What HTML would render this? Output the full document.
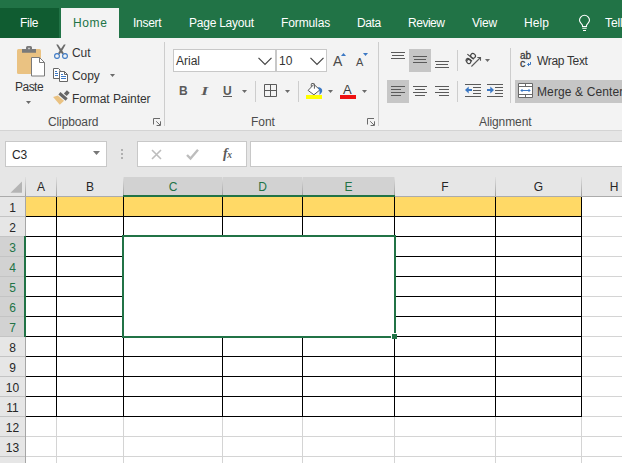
<!DOCTYPE html>
<html>
<head>
<meta charset="utf-8">
<style>
html,body{margin:0;padding:0;overflow:hidden;}
#root{position:absolute;left:0;top:0;width:622px;height:463px;overflow:hidden;background:#fff;}
body{width:622px;height:463px;overflow:hidden;position:relative;background:#fff;font-family:"Liberation Sans",sans-serif;font-size:12px;color:#262626;}
.a{position:absolute;}
.t{position:absolute;white-space:nowrap;line-height:14px;height:14px;}
svg{position:absolute;overflow:visible;}
#top{left:0;top:0;width:622px;height:38px;background:#217346;}
#file{left:0;top:8px;width:59px;height:30px;background:#105c31;}
#home{left:61px;top:8px;width:58px;height:31px;background:#f3f3f3;}
#rib{left:0;top:38px;width:622px;height:92px;background:#f3f3f3;}
#band{left:0;top:130px;width:622px;height:48px;background:#e6e6e6;}
#bandline{left:0;top:130px;width:622px;height:1px;background:#d4d4d4;}
.box{position:absolute;background:#fff;border:1px solid #c8c8c8;box-sizing:border-box;}
.vs{position:absolute;width:1px;background:#cdcdcd;}
.sel{position:absolute;background:#c6c6c6;}
.hl{position:absolute;height:1px;background:#d4d4d4;}
.vl{position:absolute;width:1px;background:#d4d4d4;}
.bh{position:absolute;height:1px;background:#000;}
.bv{position:absolute;width:1px;background:#000;}
</style>
</head>
<body>
<div id="root">
<div class="a" id="top"></div>
<div class="a" id="file"></div>
<div class="a" id="home"></div>
<div class="a" id="rib"></div>
<div class="a" id="band"></div>
<div class="a" id="bandline"></div>
<!-- bulb -->
<svg style="left:578px;top:14px;" width="13" height="18" viewBox="0 0 13 18" fill="none" stroke="#fff" stroke-width="1.1">
<path d="M4.500 12.500v-1C4.500 9.800 1.500 9 1.500 6.300a5 5 0 0 1 10 0C11.500 9 8.500 9.800 8.500 11.500v1z"/>
<path d="M4.300 14.200h4.400M5 16.500h3"/>
</svg>

<!-- ===== clipboard ===== -->
<svg style="left:16px;top:44px;" width="30" height="34" viewBox="0 0 30 34">
<rect x="1" y="5" width="24" height="25" rx="1.500" fill="#eac282"/>
<path d="M10 3.500a1.500 1.500 0 0 1 1.500-1.500h3a1.500 1.500 0 0 1 1.500 1.500v1.500h4v3.800h-14v-3.800h4z" fill="#7a7a7a"/><rect x="12.300" y="3.800" width="1.400" height="1.400" fill="#e8e8e8"/>
<path d="M15.500 13.500h8l5 5v13.500h-13z" fill="#fff" stroke="#7a7a7a" stroke-width="1"/>
<path d="M23.500 13.500v5h5" fill="none" stroke="#7a7a7a" stroke-width="1"/>
</svg>
<svg style="left:26px;top:101px;" width="5" height="3" viewBox="0 0 5 3"><path d="M0 0h5L2.500 3z" fill="#6a6a6a"/></svg>
<!-- cut -->
<svg style="left:53px;top:44px;" width="16" height="16" viewBox="0 0 16 16" fill="none">
<path d="M3.200 0.500L5 0.500L9.100 6.400L10.900 9.300L9.300 10.200L7 7.300z" fill="#6a6a6a"/>
<path d="M12.700 0.500L10.900 0.500L6.800 6.400L5 9.300L6.600 10.200L8.900 7.300z" fill="#6a6a6a"/>
<circle cx="4" cy="12" r="2.400" stroke="#3b78c4" stroke-width="1.100"/>
<circle cx="12" cy="12" r="2.400" stroke="#3b78c4" stroke-width="1.100"/>
</svg>
<!-- copy -->
<svg style="left:53px;top:68px;" width="16" height="15" viewBox="0 0 16 15" fill="none">
<path d="M0.500 0.500H5.500L7 2V10.500H0.500z" fill="#fff" stroke="#666" stroke-width="1"/>
<path d="M2 3.500h2M2 5.500h3M2 7.500h3" stroke="#3b78c4" stroke-width="1"/>
<path d="M6.500 3.500H11.500L14.500 6.500V13.500H6.500z" fill="#fff" stroke="#666" stroke-width="1"/>
<path d="M11.500 3.500V6.500H14.500" stroke="#666" stroke-width="1"/>
<path d="M8 6.500h2M8 8.500h5M8 10.500h5" stroke="#3b78c4" stroke-width="1"/>
</svg>
<svg style="left:110px;top:74px;" width="5" height="3" viewBox="0 0 5 3"><path d="M0 0h5L2.500 3z" fill="#6a6a6a"/></svg>
<!-- format painter -->
<svg style="left:53px;top:90px;" width="17" height="15" viewBox="0 0 17 15">
<path d="M13.900 0.300L16.700 2.800L13.700 5.900L10.900 3.400z" fill="#666"/>
<path d="M7.400 2.100L14.700 8.200L12.600 10.700L5.400 4.600z" fill="#666"/>
<path d="M4.800 5.600L11 10.800L6.800 14.700L0.100 7.100z" fill="#eac282"/>
</svg>
<svg style="left:153px;top:118px;" width="8" height="8" viewBox="0 0 8 8" fill="none" stroke="#6a6a6a" stroke-width="1"><path d="M0.500 6.500V0.500H7M3.200 3.300L7 7M7.500 3.300V7.500H3.600"/></svg>
<div class="vs" style="left:164px;top:42px;height:84px;"></div>

<!-- ===== font ===== -->
<div class="box" style="left:173px;top:49px;width:103px;height:23px;"></div>
<div class="box" style="left:276px;top:49px;width:51px;height:23px;"></div>
<svg style="left:258px;top:57px;" width="14" height="8" viewBox="0 0 14 8" fill="none" stroke="#444" stroke-width="1.200"><path d="M0.500 0.800l6.500 6.500 6.500-6.500"/></svg>
<svg style="left:310px;top:57px;" width="14" height="8" viewBox="0 0 14 8" fill="none" stroke="#444" stroke-width="1.200"><path d="M0.500 0.800l6.500 6.500 6.500-6.500"/></svg>
<div class="t" style="left:333px;top:54px;font-size:14px;color:#4a4a4a;">A</div>
<svg style="left:341px;top:53px;" width="5" height="3" viewBox="0 0 5 3"><path d="M0 3h5L2.500 0z" fill="#3b78c4"/></svg>
<div class="t" style="left:356px;top:55px;font-size:11px;color:#4a4a4a;">A</div>
<svg style="left:363px;top:53px;" width="5" height="3" viewBox="0 0 5 3"><path d="M0 0h5L2.500 3z" fill="#3b78c4"/></svg>
<div class="t" style="left:179px;top:84px;font-weight:bold;color:#5a5a5a;">B</div>
<div class="t" style="left:202px;top:84px;font-style:italic;font-weight:bold;font-family:'Liberation Serif',serif;font-size:13.500px;color:#5a5a5a;transform:scaleX(1.300);transform-origin:50% 50%;">I</div>
<div class="t" style="left:223px;top:84px;font-weight:bold;font-size:12px;color:#5a5a5a;">U</div>
<div class="a" style="left:223px;top:96px;width:9px;height:1px;background:#5a5a5a;"></div>
<svg style="left:242px;top:90px;" width="5" height="3" viewBox="0 0 5 3"><path d="M0 0h5L2.500 3z" fill="#6a6a6a"/></svg>
<div class="vs" style="left:255px;top:81px;height:21px;"></div>
<svg style="left:264px;top:84px;" width="13" height="13" viewBox="0 0 13 13" fill="none" stroke="#5a5a5a" stroke-width="1"><path d="M0.500 0.500h12v12h-12zM6.500 0.500v12M0.500 6.500h12"/></svg>
<svg style="left:285px;top:90px;" width="5" height="3" viewBox="0 0 5 3"><path d="M0 0h5L2.500 3z" fill="#6a6a6a"/></svg>
<div class="vs" style="left:298px;top:81px;height:21px;"></div>
<svg style="left:306px;top:82px;" width="18" height="18" viewBox="0 0 18 18" fill="none">
<path d="M2.100 8.400L7.900 2.400L13.900 7.900L7.900 12.800z" fill="#fff" stroke="#5a5a5a" stroke-width="1"/>
<path d="M5.300 4.700V2.200Q5.300 1.500 6 1.500H7.700Q8.400 1.500 8.400 2.200V6.700" stroke="#5a5a5a" stroke-width="1"/>
<path d="M12 5C15 5.300 16.600 7 16.200 9.200C15.900 10.700 14.600 12.100 13.200 12.700C13.600 11.200 13.800 9.600 13.300 8.400z" fill="#3b78c4"/>
<rect x="0" y="13" width="16" height="4" fill="#ffff00"/>
</svg>
<svg style="left:328px;top:90px;" width="5" height="3" viewBox="0 0 5 3"><path d="M0 0h5L2.500 3z" fill="#6a6a6a"/></svg>
<div class="t" style="left:343px;top:83px;font-size:13px;color:#3a3a3a;">A</div>
<div class="a" style="left:340px;top:95px;width:16px;height:4px;background:#ee1111;"></div>
<svg style="left:362px;top:90px;" width="5" height="3" viewBox="0 0 5 3"><path d="M0 0h5L2.500 3z" fill="#6a6a6a"/></svg>
<svg style="left:367px;top:118px;" width="8" height="8" viewBox="0 0 8 8" fill="none" stroke="#6a6a6a" stroke-width="1"><path d="M0.500 6.500V0.500H7M3.200 3.300L7 7M7.500 3.300V7.500H3.600"/></svg>
<div class="vs" style="left:378px;top:42px;height:84px;"></div>

<!-- ===== alignment ===== -->
<div class="sel" style="left:409px;top:49px;width:22px;height:23px;"></div>
<div class="sel" style="left:387px;top:80px;width:22px;height:23px;"></div>
<div class="sel" style="left:515px;top:80px;width:107px;height:23px;"></div>
<svg style="left:391px;top:50px;" width="14" height="20" viewBox="0 0 14 20" stroke="#5a5a5a" stroke-width="1"><path d="M0 2.500h14M1 5.500h12M0 8.500h14"/></svg>
<svg style="left:413px;top:50px;" width="14" height="20" viewBox="0 0 14 20" stroke="#5a5a5a" stroke-width="1"><path d="M0 6.500h14M1 9.500h12M0 12.500h14"/></svg>
<svg style="left:435px;top:50px;" width="14" height="20" viewBox="0 0 14 20" stroke="#5a5a5a" stroke-width="1"><path d="M0 11.500h14M1 14.500h12M0 17.500h14"/></svg>
<svg style="left:391px;top:85px;" width="14" height="14" viewBox="0 0 14 14" stroke="#5a5a5a" stroke-width="1"><path d="M0 1.500h14M0 4.500h10M0 7.500h14M0 10.500h10"/></svg>
<svg style="left:413px;top:85px;" width="14" height="14" viewBox="0 0 14 14" stroke="#5a5a5a" stroke-width="1"><path d="M0 1.500h14M2 4.500h10M0 7.500h14M2 10.500h10"/></svg>
<svg style="left:435px;top:85px;" width="14" height="14" viewBox="0 0 14 14" stroke="#5a5a5a" stroke-width="1"><path d="M0 1.500h14M4 4.500h10M0 7.500h14M4 10.500h10"/></svg>
<div class="vs" style="left:457px;top:50px;height:21px;"></div>
<div class="vs" style="left:457px;top:81px;height:21px;"></div>
<!-- orientation -->
<svg style="left:462px;top:50px;" width="18" height="18" viewBox="0 0 18 18" fill="none" stroke="#444" stroke-width="1.150"><g transform="translate(6.700 15.260) rotate(-50)"><ellipse cx="2.900" cy="-2.300" rx="2" ry="2.100"/><path d="M1.300 -4.800Q3.200 -6.300 4.700 -5.200Q5.200 -4.700 5.200 -3.600V0"/><path d="M7.700 -8.200V0"/><ellipse cx="10" cy="-2.700" rx="2.200" ry="2.500"/></g></svg>
<svg style="left:469px;top:56px;" width="14" height="12" viewBox="0 0 14 12" fill="none" stroke="#5a5a5a" stroke-width="1.100"><path d="M2.400 10.500L11.500 1.500M8.300 1.500H11.500V4.700"/></svg>
<svg style="left:485px;top:59px;" width="5" height="3" viewBox="0 0 5 3"><path d="M0 0h5L2.500 3z" fill="#6a6a6a"/></svg>
<!-- indents -->
<svg style="left:465px;top:84px;" width="16" height="13" viewBox="0 0 16 13" fill="none"><path d="M0 0.500h16M8 3.500h8M8 6.500h8M8 9.500h8M0 12.500h16" stroke="#5a5a5a" stroke-width="1"/><path d="M0 6L3.700 2.500V5H7V7H3.700V9.500z" fill="#3b78c4"/></svg>
<svg style="left:487px;top:84px;" width="16" height="13" viewBox="0 0 16 13" fill="none"><path d="M0 0.500h16M8 3.500h8M8 6.500h8M8 9.500h8M0 12.500h16" stroke="#5a5a5a" stroke-width="1"/><path d="M7 6L3.300 2.500V5H0V7H3.300V9.500z" fill="#3b78c4"/></svg>
<div class="vs" style="left:510px;top:48px;height:55px;"></div>
<!-- wrap text -->
<div class="t" style="left:520px;top:51px;font-size:10px;line-height:10px;height:10px;color:#3a3a3a;-webkit-text-stroke:0.300px #3a3a3a;">ab</div>
<div class="t" style="left:520px;top:58px;font-size:10.500px;line-height:10px;height:10px;color:#3a3a3a;-webkit-text-stroke:0.300px #3a3a3a;">c</div>
<svg style="left:527px;top:62px;" width="4" height="4" viewBox="0 0 4 4" fill="none" stroke="#3b78c4" stroke-width="1"><path d="M3.500 0v2.500H0.800M2 1L0.500 2.500 2 4"/></svg>
<!-- merge -->
<svg style="left:518px;top:83px;" width="15" height="15" viewBox="0 0 15 15" fill="none"><path d="M0.500 0.500h14v14h-14z" fill="#fff" stroke="#6a6a6a"/><path d="M0.500 3.500h14M0.500 11.500h14M7.500 0.500v3M7.500 11.500v3" stroke="#6a6a6a"/><path d="M3 7.500h9M4.500 6L3 7.500 4.500 9M10.500 6L12 7.500 10.500 9" stroke="#3b78c4"/></svg>

<!-- ===== formula bar ===== -->
<div class="box" style="left:5px;top:141px;width:102px;height:26px;"></div>
<svg style="left:93px;top:151px;" width="7" height="4" viewBox="0 0 7 4"><path d="M0 0h7L3.500 4z" fill="#777"/></svg>
<div class="a" style="left:121px;top:149px;width:2px;height:2px;background:#b0b0b0;box-shadow:0 4px 0 #b0b0b0,0 8px 0 #b0b0b0;"></div>
<div class="box" style="left:137px;top:141px;width:110px;height:26px;"></div>
<svg style="left:151px;top:149px;" width="11" height="11" viewBox="0 0 11 11" stroke="#bdbdbd" stroke-width="1.600" fill="none"><path d="M1 1l9 9M10 1l-9 9"/></svg>
<svg style="left:186px;top:149px;" width="13" height="11" viewBox="0 0 13 11" stroke="#bdbdbd" stroke-width="2.400" fill="none"><path d="M1 6l3.500 3.500L12 0.800"/></svg>
<div class="t" style="left:223px;top:147px;font-family:'Liberation Serif',serif;font-style:italic;font-weight:bold;font-size:14px;color:#5a5a5a;">f<span style="font-size:9.500px;letter-spacing:0;margin-left:-0.500px;">x</span></div>
<div class="box" style="left:250px;top:141px;width:380px;height:26px;"></div>

<!-- ===== grid ===== -->
<div class="a" style="left:0;top:178px;width:622px;height:19px;background:#e6e6e6;"></div>
<div class="a" style="left:0;top:197px;width:26px;height:266px;background:#e6e6e6;"></div>
<div class="a" style="left:124px;top:177px;width:270px;height:19px;background:#d2d2d2;"></div>
<div class="a" style="left:0;top:236px;width:25px;height:100px;background:#d2d2d2;"></div>
<svg style="left:10px;top:181px;" width="13" height="13" viewBox="0 0 13 13"><path d="M12 0.500V11.800H0.500z" fill="#b4b4b4"/></svg>
<div class="a" style="left:25px;top:177px;width:1px;height:20px;background:linear-gradient(#e0e0e0,#9c9c9c);"></div>
<div class="a" style="left:56px;top:177px;width:1px;height:20px;background:linear-gradient(#e0e0e0,#9c9c9c);"></div>
<div class="a" style="left:123px;top:177px;width:1px;height:20px;background:linear-gradient(#e0e0e0,#9c9c9c);"></div>
<div class="a" style="left:222px;top:177px;width:1px;height:20px;background:linear-gradient(#e0e0e0,#9c9c9c);"></div>
<div class="a" style="left:302px;top:177px;width:1px;height:20px;background:linear-gradient(#e0e0e0,#9c9c9c);"></div>
<div class="a" style="left:394px;top:177px;width:1px;height:20px;background:linear-gradient(#e0e0e0,#9c9c9c);"></div>
<div class="a" style="left:495px;top:177px;width:1px;height:20px;background:linear-gradient(#e0e0e0,#9c9c9c);"></div>
<div class="a" style="left:581px;top:177px;width:1px;height:20px;background:linear-gradient(#e0e0e0,#9c9c9c);"></div>
<div class="t" style="left:26px;width:30px;top:180px;text-align:center;color:#262626;">A</div>
<div class="t" style="left:57px;width:66px;top:180px;text-align:center;color:#262626;">B</div>
<div class="t" style="left:124px;width:98px;top:180px;text-align:center;color:#217346;">C</div>
<div class="t" style="left:223px;width:79px;top:180px;text-align:center;color:#217346;">D</div>
<div class="t" style="left:303px;width:91px;top:180px;text-align:center;color:#217346;">E</div>
<div class="t" style="left:395px;width:100px;top:180px;text-align:center;color:#262626;">F</div>
<div class="t" style="left:496px;width:85px;top:180px;text-align:center;color:#262626;">G</div>
<div class="t" style="left:582px;width:64px;top:180px;text-align:center;color:#262626;">H</div>
<div class="t" style="left:0;width:25px;top:201px;text-align:center;color:#262626;">1</div>
<div class="a" style="left:0;top:216px;width:25px;height:1px;background:#c4c4c4;"></div>
<div class="t" style="left:0;width:25px;top:221px;text-align:center;color:#262626;">2</div>
<div class="a" style="left:0;top:236px;width:25px;height:1px;background:#c4c4c4;"></div>
<div class="t" style="left:0;width:25px;top:241px;text-align:center;color:#217346;">3</div>
<div class="a" style="left:0;top:256px;width:25px;height:1px;background:#c4c4c4;"></div>
<div class="t" style="left:0;width:25px;top:261px;text-align:center;color:#217346;">4</div>
<div class="a" style="left:0;top:276px;width:25px;height:1px;background:#c4c4c4;"></div>
<div class="t" style="left:0;width:25px;top:281px;text-align:center;color:#217346;">5</div>
<div class="a" style="left:0;top:296px;width:25px;height:1px;background:#c4c4c4;"></div>
<div class="t" style="left:0;width:25px;top:301px;text-align:center;color:#217346;">6</div>
<div class="a" style="left:0;top:316px;width:25px;height:1px;background:#c4c4c4;"></div>
<div class="t" style="left:0;width:25px;top:321px;text-align:center;color:#217346;">7</div>
<div class="a" style="left:0;top:336px;width:25px;height:1px;background:#c4c4c4;"></div>
<div class="t" style="left:0;width:25px;top:341px;text-align:center;color:#262626;">8</div>
<div class="a" style="left:0;top:356px;width:25px;height:1px;background:#c4c4c4;"></div>
<div class="t" style="left:0;width:25px;top:361px;text-align:center;color:#262626;">9</div>
<div class="a" style="left:0;top:376px;width:25px;height:1px;background:#c4c4c4;"></div>
<div class="t" style="left:0;width:25px;top:381px;text-align:center;color:#262626;">10</div>
<div class="a" style="left:0;top:396px;width:25px;height:1px;background:#c4c4c4;"></div>
<div class="t" style="left:0;width:25px;top:401px;text-align:center;color:#262626;">11</div>
<div class="a" style="left:0;top:416px;width:25px;height:1px;background:#c4c4c4;"></div>
<div class="t" style="left:0;width:25px;top:421px;text-align:center;color:#262626;">12</div>
<div class="a" style="left:0;top:436px;width:25px;height:1px;background:#c4c4c4;"></div>
<div class="t" style="left:0;width:25px;top:441px;text-align:center;color:#262626;">13</div>
<div class="a" style="left:0;top:456px;width:25px;height:1px;background:#c4c4c4;"></div>
<div class="a" style="left:0;top:476px;width:25px;height:1px;background:#c4c4c4;"></div>
<div class="a" style="left:26px;top:197px;width:555px;height:19px;background:#ffd966;"></div>
<div class="hl" style="left:26px;top:216px;width:596px;"></div>
<div class="hl" style="left:26px;top:236px;width:596px;"></div>
<div class="hl" style="left:26px;top:256px;width:596px;"></div>
<div class="hl" style="left:26px;top:276px;width:596px;"></div>
<div class="hl" style="left:26px;top:296px;width:596px;"></div>
<div class="hl" style="left:26px;top:316px;width:596px;"></div>
<div class="hl" style="left:26px;top:336px;width:596px;"></div>
<div class="hl" style="left:26px;top:356px;width:596px;"></div>
<div class="hl" style="left:26px;top:376px;width:596px;"></div>
<div class="hl" style="left:26px;top:396px;width:596px;"></div>
<div class="hl" style="left:26px;top:416px;width:596px;"></div>
<div class="hl" style="left:26px;top:436px;width:596px;"></div>
<div class="hl" style="left:26px;top:456px;width:596px;"></div>
<div class="hl" style="left:26px;top:476px;width:596px;"></div>
<div class="vl" style="left:25px;top:197px;height:266px;"></div>
<div class="vl" style="left:56px;top:197px;height:266px;"></div>
<div class="vl" style="left:123px;top:197px;height:266px;"></div>
<div class="vl" style="left:222px;top:197px;height:266px;"></div>
<div class="vl" style="left:302px;top:197px;height:266px;"></div>
<div class="vl" style="left:394px;top:197px;height:266px;"></div>
<div class="vl" style="left:495px;top:197px;height:266px;"></div>
<div class="vl" style="left:581px;top:197px;height:266px;"></div>
<div class="bh" style="left:26px;top:216px;width:556px;"></div>
<div class="bh" style="left:26px;top:236px;width:556px;"></div>
<div class="bh" style="left:26px;top:256px;width:556px;"></div>
<div class="bh" style="left:26px;top:276px;width:556px;"></div>
<div class="bh" style="left:26px;top:296px;width:556px;"></div>
<div class="bh" style="left:26px;top:316px;width:556px;"></div>
<div class="bh" style="left:26px;top:336px;width:556px;"></div>
<div class="bh" style="left:26px;top:356px;width:556px;"></div>
<div class="bh" style="left:26px;top:376px;width:556px;"></div>
<div class="bh" style="left:26px;top:396px;width:556px;"></div>
<div class="bh" style="left:26px;top:416px;width:556px;"></div>
<div class="bv" style="left:56px;top:197px;height:220px;"></div>
<div class="bv" style="left:123px;top:197px;height:220px;"></div>
<div class="bv" style="left:222px;top:197px;height:220px;"></div>
<div class="bv" style="left:302px;top:197px;height:220px;"></div>
<div class="bv" style="left:394px;top:197px;height:220px;"></div>
<div class="bv" style="left:495px;top:197px;height:220px;"></div>
<div class="bv" style="left:581px;top:197px;height:220px;"></div>
<div class="a" style="left:124px;top:237px;width:270px;height:99px;background:#fff;"></div>
<div class="a" style="left:122px;top:235px;width:274px;height:103px;border:2px solid #217346;box-sizing:border-box;"></div>
<div class="a" style="left:391px;top:333px;width:5px;height:5px;background:#217346;border-left:1px solid #fff;border-top:1px solid #fff;box-sizing:content-box;"></div>
<div class="a" style="left:0;top:196px;width:622px;height:1px;background:#ababab;"></div>
<div class="a" style="left:25px;top:197px;width:1px;height:266px;background:#a6a6a6;"></div>
<div class="a" style="left:123px;top:195px;width:272px;height:2px;background:#217346;"></div>
<div class="a" style="left:24px;top:236px;width:2px;height:101px;background:#217346;"></div>

<div class="t" style="left:20px;top:16px;letter-spacing:-0.27px;color:#fff;">File</div>
<div class="t" style="left:73px;top:16px;letter-spacing:0.6px;color:#217346;">Home</div>
<div class="t" style="left:133px;top:16px;letter-spacing:-0.28px;color:#fff;">Insert</div>
<div class="t" style="left:189px;top:16px;letter-spacing:-0.24px;color:#fff;">Page Layout</div>
<div class="t" style="left:281px;top:16px;letter-spacing:-0.11px;color:#fff;">Formulas</div>
<div class="t" style="left:357px;top:16px;letter-spacing:-0.37px;color:#fff;">Data</div>
<div class="t" style="left:408px;top:16px;letter-spacing:-0.48px;color:#fff;">Review</div>
<div class="t" style="left:472px;top:16px;letter-spacing:-0.2px;color:#fff;">View</div>
<div class="t" style="left:524px;top:16px;letter-spacing:0.07px;color:#fff;">Help</div>
<div class="t" style="left:605px;top:16px;letter-spacing:-0.1px;color:#fff;">Tell</div>
<div class="t" style="left:72px;top:46px;letter-spacing:-0.1px;color:#333;">Cut</div>
<div class="t" style="left:72px;top:69px;letter-spacing:-0.07px;color:#333;">Copy</div>
<div class="t" style="left:72px;top:92px;letter-spacing:-0.06px;color:#333;">Format Painter</div>
<div class="t" style="left:15px;top:80px;letter-spacing:-0.52px;color:#333;">Paste</div>
<div class="t" style="left:48px;top:115px;letter-spacing:-0.11px;color:#4c4c4c;">Clipboard</div>
<div class="t" style="left:176px;top:54px;letter-spacing:0.0px;color:#333;">Arial</div>
<div class="t" style="left:279px;top:54px;letter-spacing:0.1px;color:#333;">10</div>
<div class="t" style="left:251px;top:115px;letter-spacing:-0.03px;color:#4c4c4c;">Font</div>
<div class="t" style="left:537px;top:54px;letter-spacing:-0.33px;color:#333;">Wrap Text</div>
<div class="t" style="left:537px;top:85px;letter-spacing:0.12px;color:#333;">Merge &amp; Center</div>
<div class="t" style="left:479px;top:115px;letter-spacing:-0.1px;color:#4c4c4c;">Alignment</div>
<div class="t" style="left:12px;top:148px;letter-spacing:-0.05px;">C3</div>
</div>
</body>
</html>
